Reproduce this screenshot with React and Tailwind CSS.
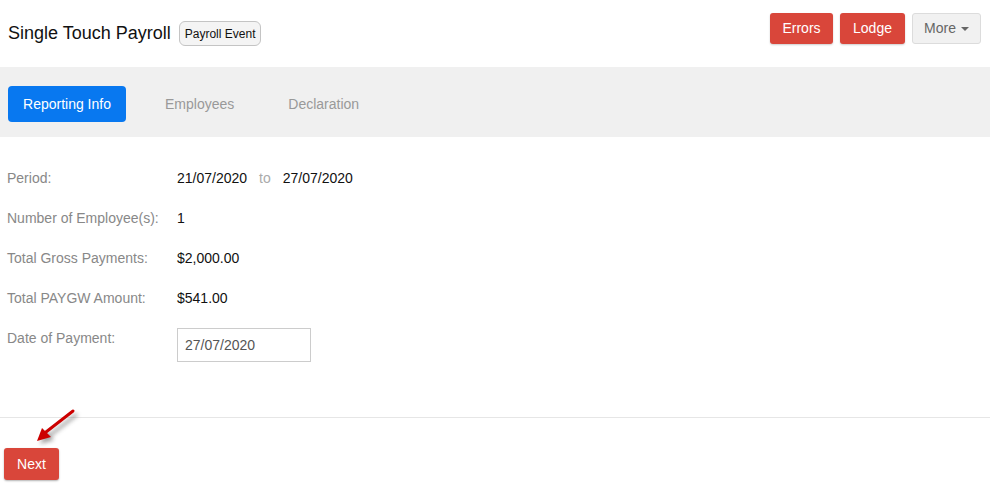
import React from "react";

export default function App() {
  const rows = [
    { label: "Period:", value: null },
    { label: "Number of Employee(s):", value: "1" },
    { label: "Total Gross Payments:", value: "$2,000.00" },
    { label: "Total PAYGW Amount:", value: "$541.00" },
  ];
  return (
    <div className="relative w-[990px] h-[490px] bg-white overflow-hidden font-['Liberation_Sans',Arial,sans-serif] text-[14px]">
      {/* Header */}
      <div className="h-[67px] flex items-start justify-between">
        <div className="flex items-center pl-2 pt-[21px]">
          <span className="text-[18px] leading-[25px] text-[#111]">Single Touch Payroll</span>
          <span className="ml-[8px] h-[25px] px-[5px] flex items-center text-[12px] text-[#111] bg-[#f4f4f4] border border-[#c4c4c4] rounded-[6px]">
            Payroll Event
          </span>
        </div>
        <div className="flex gap-[7px] pt-[13px] pr-[9px]">
          <button className="h-[31px] w-[63px] bg-[#d9463a] text-white rounded-[3px] shadow-[0_1px_2px_rgba(0,0,0,0.2)]">Errors</button>
          <button className="h-[31px] w-[65px] bg-[#d9463a] text-white rounded-[3px] shadow-[0_1px_2px_rgba(0,0,0,0.2)]">Lodge</button>
          <button className="h-[31px] w-[69px] bg-[#f1f1f1] text-[#666] border border-[#dcdcdc] rounded-[3px] flex items-center justify-center gap-[5px]">
            More
            <span className="w-0 h-0 border-l-[4px] border-r-[4px] border-t-[4px] border-l-transparent border-r-transparent border-t-[#666]" />
          </button>
        </div>
      </div>

      {/* Tab band */}
      <div className="h-[70px] bg-[#f0f0f0] flex items-start pt-[19px] pl-2">
        <div className="h-[36px] w-[118px] flex items-center justify-center bg-[#0878f0] text-white rounded-[4px]">Reporting Info</div>
        <div className="h-[36px] ml-[23px] px-4 flex items-center text-[#999]">Employees</div>
        <div className="h-[36px] ml-[22px] px-4 flex items-center text-[#999]">Declaration</div>
      </div>

      {/* Content */}
      <div className="pt-[21px] pl-[7px]">
        {rows.map((r, i) => (
          <div key={i} className="h-[40px] flex items-start pt-[10px]">
            <div className="w-[170px] leading-[20px] text-[#888]">{r.label}</div>
            <div className="leading-[20px] text-[#111] flex">
              {r.value === null ? (
                <>
                  <span>21/07/2020</span>
                  <span className="mx-[12px] text-[#aaa]">to</span>
                  <span>27/07/2020</span>
                </>
              ) : (
                r.value
              )}
            </div>
          </div>
        ))}
        <div className="h-[44px] flex items-start pt-[10px]">
          <div className="w-[170px] leading-[20px] text-[#888]">Date of Payment:</div>
          <div className="w-[134px] h-[34px] border border-[#ccc] flex items-center pl-[7px] text-[#555]">27/07/2020</div>
        </div>
      </div>

      <div className="h-[55px]" />
      <div className="border-t border-[#e6e6e6]" />

      <div className="pt-[30px] pl-1">
        <button className="h-[32px] w-[55px] bg-[#d9463a] text-white rounded-[3px] shadow-[0_1px_2px_rgba(0,0,0,0.3)]">Next</button>
      </div>

      {/* annotation arrow */}
      <svg className="absolute left-0 top-[400px]" width="100" height="60" viewBox="0 0 100 60">
        <defs>
          <filter id="sh" x="-50%" y="-50%" width="200%" height="200%">
            <feGaussianBlur stdDeviation="2" />
          </filter>
        </defs>
        <g transform="translate(3,3)" opacity="0.55" filter="url(#sh)">
          <line x1="73" y1="12" x2="46" y2="33" stroke="#555" strokeWidth="3" strokeLinecap="round" />
          <polygon points="37,41 43,28 51,37" fill="#555" />
        </g>
        <line x1="73" y1="11" x2="46" y2="32" stroke="#cc0000" strokeWidth="3" strokeLinecap="round" />
        <polygon points="37,41 42,28 51,37" fill="#cc0000" />
      </svg>
    </div>
  );
}
